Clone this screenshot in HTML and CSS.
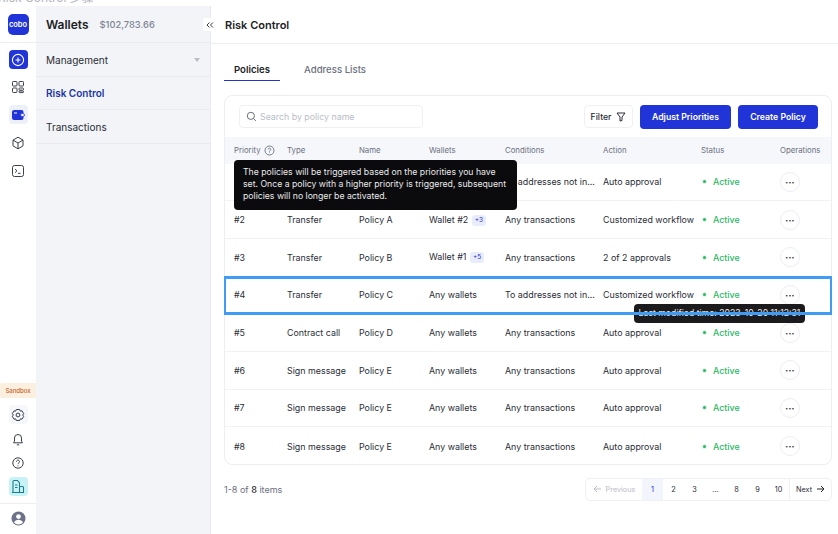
FILE: index.html
```html
<!DOCTYPE html>
<html lang="en">
<head>
<meta charset="utf-8">
<title>Risk Control</title>
<link rel="stylesheet" href="styles.css">
</head>
<body>
<div class="strip"><span>Risk Control 步骤</span></div>
<div class="app">
  <aside class="rail">
    <div class="rail-top">
      <div class="logo">cobo</div>
    </div>
    <div class="rail-main">
      <div class="rail-btn add"><svg width="14" height="14" viewBox="0 0 14 14" fill="none" stroke="#fff" stroke-width="1.1"><circle cx="7" cy="7" r="5.6"/><path d="M7 4.5v5M4.5 7h5"/></svg></div>
      <div class="rail-btn"><svg width="14" height="14" viewBox="0 0 14 14" fill="none" stroke="#3a3f4b" stroke-width="1"><rect x="1.5" y="1.5" width="4.5" height="4.5" rx=".8"/><rect x="8" y="1.5" width="4.5" height="4.5" rx=".8"/><rect x="1.5" y="8" width="4.5" height="4.5" rx=".8"/><rect x="8" y="8" width="4.5" height="2.2" rx=".8"/><rect x="8" y="11" width="4.5" height="1.6" rx=".6"/></svg></div>
      <div class="rail-btn soft"><svg width="14" height="12" viewBox="0 0 14 12"><rect x="1" y="1" width="11.5" height="10" rx="2" fill="#2134d8"/><path d="M3 4h3" stroke="#fff" stroke-width="1"/><rect x="9.5" y="4.6" width="4" height="2.8" rx="1.4" fill="#fff" stroke="#2134d8" stroke-width=".8"/></svg></div>
      <div class="rail-btn"><svg width="14" height="14" viewBox="0 0 14 14" fill="none" stroke="#3a3f4b" stroke-width="1"><path d="M7 1.2l5 2.9v5.8l-5 2.9-5-2.9V4.100zM2 4.100l5 2.900 5-2.900M7 7v5.800"/></svg></div>
      <div class="rail-btn"><svg width="14" height="14" viewBox="0 0 14 14" fill="none" stroke="#3a3f4b" stroke-width="1"><rect x="1.5" y="1.500" width="11" height="11" rx="2"/><path d="M4 5l2 1.800L4 8.600M7 9.300h2.500"/></svg></div>
    </div>
    <div class="rail-bottom">
      <div class="sandbox">Sandbox</div>
      <div class="rail-btn pale"><svg width="14" height="14" viewBox="0 0 14 14" fill="none" stroke="#3a3f4b" stroke-width="1"><path d="M5.300 1.500h3.400l.6 1.600 1.700-.3 1.700 2.900-1.100 1.300 1.100 1.300-1.700 2.900-1.700-.3-.6 1.600H5.300l-.6-1.600-1.700.3-1.700-2.900L2.400 7 1.300 5.700 3 2.800l1.700.3z"/><circle cx="7" cy="7" r="1.900"/></svg></div>
      <div class="rail-btn"><svg width="14" height="14" viewBox="0 0 14 14" fill="none" stroke="#3a3f4b" stroke-width="1"><path d="M2.500 10.800h9l-1-1.500V6a3.500 3.500 0 0 0-7 0v3.300zM5.800 12.800h2.400"/></svg></div>
      <div class="rail-btn"><svg width="14" height="14" viewBox="0 0 14 14" fill="none" stroke="#3a3f4b" stroke-width="1"><circle cx="7" cy="7" r="5.200"/><path d="M5.500 5.600a1.500 1.500 0 1 1 2.300 1.300c-.6.400-.8.700-.8 1.300M7 9.500v.8"/></svg></div>
      <div class="rail-btn cyan"><svg width="14" height="15" viewBox="0 0 14 15" fill="none" stroke="#1f7c8c" stroke-width="1.100"><path d="M2 13.500V2.500a1 1 0 0 1 1-1h3.500l2 2.500v9.500zM8.500 7.500h3a1 1 0 0 1 1 1v5h-4M4 6h2.500M4 8.500h2.500M1 13.500h12"/></svg></div>
      <div class="rail-user"><svg width="15" height="15" viewBox="0 0 15 15"><circle cx="7.500" cy="7.500" r="7" fill="#6b7189"/><circle cx="7.500" cy="5.600" r="2.400" fill="#fff"/><path d="M3 11.500c.8-2 2.500-2.800 4.500-2.800s3.700.8 4.500 2.800a6 6 0 0 1-9 0z" fill="#fff"/></svg></div>
    </div>
  </aside>

  <nav class="panel">
    <div class="panel-head">
      <span class="panel-title">Wallets</span>
      <span class="panel-amount">$102,783.66</span>
    </div>
    <div class="nav-row"><span>Management</span><i class="caret"></i></div>
    <div class="nav-row current"><span>Risk Control</span></div>
    <div class="nav-row"><span>Transactions</span></div>
    <button class="collapse" type="button"><svg width="8" height="8" viewBox="0 0 8 8" fill="none" stroke="#3a3f4b" stroke-width="1"><path d="M3.500 1.500L1 4l2.500 2.500M7 1.500L4.500 4 7 6.500"/></svg></button>
  </nav>

  <main class="main">
    <header class="main-head">Risk Control</header>
    <div class="content">
      <div class="tabs">
        <span class="tab active">Policies</span>
        <span class="tab">Address Lists</span>
      </div>
      <section class="card">
        <div class="toolbar">
          <div class="search"><svg width="11" height="11" viewBox="0 0 12 12" fill="none" stroke="#5b6070" stroke-width="1"><circle cx="5.300" cy="5.300" r="3.900"/><path d="M8.200 8.200l2.600 2.600"/></svg><span>Search by policy name</span></div>
          <div class="tools">
            <div class="filter">Filter <svg width="10" height="10" viewBox="0 0 10 10" fill="none" stroke="#2b2f3a" stroke-width="1"><path d="M1 1h8L6 5v3.500L4 9V5z"/></svg></div>
            <div class="btn wide">Adjust Priorities</div>
            <div class="btn">Create Policy</div>
          </div>
        </div>
        <div class="row head">
          <span class="pri">Priority <svg width="11" height="11" viewBox="0 0 11 11" fill="none" stroke="#5b6070" stroke-width=".8"><circle cx="5.500" cy="5.500" r="4.500"/><path d="M4.200 4.400a1.300 1.300 0 1 1 2 1.100c-.5.300-.7.500-.7 1M5.500 7.500v.6"/></svg></span>
          <span>Type</span><span>Name</span><span>Wallets</span><span>Conditions</span><span>Action</span><span>Status</span><span>Operations</span>
        </div>
        <div class="row"><span>#1</span><span>Transfer</span><span>Policy A</span><span>Any wallets</span><span>To addresses not in...</span><span>Auto approval</span><span class="status">Active</span><span class="more">•••</span></div>
        <div class="row"><span>#2</span><span>Transfer</span><span>Policy A</span><span>Wallet #2 <em>+3</em></span><span>Any transactions</span><span>Customized workflow</span><span class="status">Active</span><span class="more">•••</span></div>
        <div class="row"><span>#3</span><span>Transfer</span><span>Policy B</span><span>Wallet #1 <em>+5</em></span><span>Any transactions</span><span>2 of 2 approvals</span><span class="status">Active</span><span class="more">•••</span></div>
        <div class="row"><span>#4</span><span>Transfer</span><span>Policy C</span><span>Any wallets</span><span>To addresses not in...</span><span>Customized workflow</span><span class="status">Active</span><span class="more">•••</span></div>
        <div class="row"><span>#5</span><span>Contract call</span><span>Policy D</span><span>Any wallets</span><span>Any transactions</span><span>Auto approval</span><span class="status">Active</span><span class="more">•••</span></div>
        <div class="row"><span>#6</span><span>Sign message</span><span>Policy E</span><span>Any wallets</span><span>Any transactions</span><span>Auto approval</span><span class="status">Active</span><span class="more">•••</span></div>
        <div class="row"><span>#7</span><span>Sign message</span><span>Policy E</span><span>Any wallets</span><span>Any transactions</span><span>Auto approval</span><span class="status">Active</span><span class="more">•••</span></div>
        <div class="row last"><span>#8</span><span>Sign message</span><span>Policy E</span><span>Any wallets</span><span>Any transactions</span><span>Auto approval</span><span class="status">Active</span><span class="more">•••</span></div>
        <div class="tip tip-a">The policies will be triggered based on the priorities you have set. Once a policy with a higher priority is triggered, subsequent policies will no longer be activated.</div>
        <div class="tip tip-b">Last modified time: 2023-10-20 11:12:31</div>
        <div class="highlight"></div>
      </section>
      <footer class="foot">
        <span class="count">1-8 of <b>8</b> items</span>
        <div class="pager">
          <span class="prev"><svg width="9" height="8" viewBox="0 0 9 8" fill="none" stroke="#b9bdc7" stroke-width="1"><path d="M8 4H1M4 1L1 4l3 3"/></svg>Previous</span>
          <span class="page on">1</span><span class="page">2</span><span class="page">3</span><span class="page">...</span><span class="page">8</span><span class="page">9</span><span class="page">10</span>
          <span class="next">Next<svg width="9" height="8" viewBox="0 0 9 8" fill="none" stroke="#23262f" stroke-width="1"><path d="M1 4h7M5 1l3 3-3 3"/></svg></span>
        </div>
      </footer>
    </div>
  </main>
</div>
</body>
</html>
```
FILE: styles.css
```css
* { box-sizing: border-box; }
html, body { margin: 0; height: 100%; }
body {
  width: 838px; height: 534px; overflow: hidden; background: #fff;
  font-family: Inter, "Noto Sans CJK SC", sans-serif; font-size: 9px; color: #2a2d36;
}
.strip { height: 6px; overflow: hidden; color: #b4b6bb; font-size: 12px; line-height: 1; }
.strip span { display: block; margin-top: -8px; margin-left: -2px; }
.app { display: flex; height: 528px; }

.rail { width: 36px; flex: none; display: flex; flex-direction: column; background: #fff; }
.rail-top { height: 37px; display: flex; align-items: center; justify-content: center; border-bottom: 1px solid #eceef1; padding-top: 1px; }
.logo { width: 21px; height: 21px; border-radius: 5px; background: #2134d8; color: #fff; font-size: 7.500px; font-weight: 600; display: flex; align-items: center; justify-content: center; }
.rail-main { padding-top: 7px; display: flex; flex-direction: column; align-items: center; gap: 9px; flex: 1; }
.rail-btn { width: 19px; height: 19px; border-radius: 4px; display: flex; align-items: center; justify-content: center; flex: none; }
.rail-btn.add { background: #2134d8; margin-bottom: -1px; }
.rail-btn.soft { background: #eef0f8; }
.rail-btn.pale { background: #f6f7fb; }
.rail-btn.cyan { background: #c8f3f6; }
.rail-bottom { display: flex; flex-direction: column; align-items: center; gap: 5px; }
.sandbox { width: 36px; height: 15px; margin-bottom: 2px; background: #fbefdf; color: #c8652a; font-size: 6px; font-weight: 500; text-align: center; line-height: 15px; border-radius: 2px 0 0 2px; }
.rail-user { width: 36px; height: 31px; padding-bottom: 2px; margin-top: 2px; border-top: 1px solid #eceef1; display: flex; align-items: center; justify-content: center; }

.panel { position: relative; width: 175px; flex: none; background: #f2f4f7; border-right: 1px solid #e9ebef; }
.panel-head { height: 37px; padding: 0 10px; display: flex; align-items: center; gap: 11px; border-bottom: 1px solid #e9ebef; }
.panel-title { font-size: 12px; font-weight: 600; color: #1c1e25; }
.panel-amount { font-size: 9.300px; font-weight: 500; color: #7f8493; }
.nav-row { height: 33.500px; padding: 1px 10px 0; display: flex; align-items: center; justify-content: space-between; border-bottom: 1px solid #e9ebef; font-size: 10px; color: #2a2d36; }
.nav-row.current { color: #2134a8; font-weight: 600; }
.caret { width: 0; height: 0; border-left: 3px solid transparent; border-right: 3px solid transparent; border-top: 4px solid #b9bdc7; }
.collapse { position: absolute; top: 12px; right: -7px; width: 14px; height: 13px; padding: 0; border: 0; border-radius: 3px; background: #fff; display: flex; align-items: center; justify-content: center; }

.main { flex: 1; min-width: 0; display: flex; flex-direction: column; }
.main-head { height: 38px; padding: 0 14px; display: flex; align-items: center; border-bottom: 1px solid #eceef1; font-size: 11px; font-weight: 600; color: #1c1e25; }
.content { padding: 0 6px 0 13px; display: flex; flex-direction: column; }
.tabs { height: 37px; display: flex; align-items: flex-end; }
.tab { width: 56px; height: 26px; padding-top: 5px; text-align: center; line-height: 20px; font-size: 9.600px; color: #6b7080; font-weight: 500; }
.tab.active { color: #1c1e25; font-weight: 600; border-bottom: 1px solid #2134d8; }
.tab + .tab { margin-left: 24px; width: auto; }

.card { position: relative; margin-top: 14px; height: 370px; border: 1px solid #eceef1; border-radius: 8px; }
.toolbar { height: 41px; padding: 0 13px 0 14px; display: flex; align-items: center; justify-content: space-between; }
.search { width: 184px; height: 23px; padding: 0 6px; border: 1px solid #eef0f3; border-radius: 4px; display: flex; align-items: center; gap: 3px; color: #b9bdc7; font-size: 8.800px; }
.tools { display: flex; gap: 7px; align-items: center; }
.filter { width: 49px; height: 23px; border: 1px solid #eef0f3; border-radius: 4px; display: flex; align-items: center; justify-content: center; gap: 5px; font-size: 8.700px; font-weight: 500; }
.btn { width: 80px; height: 24px; border-radius: 4px; background: #2134d8; color: #fff; font-size: 8.700px; font-weight: 600; display: flex; align-items: center; justify-content: center; }
.btn.wide { width: 91px; }

.row { display: grid; grid-template-columns: 53px 72px 70px 76px 98px 98px 79px 1fr; height: 37.700px; padding-left: 9px; align-items: center; border-bottom: 1px solid #f1f2f5; font-size: 8.900px; }
.row.head { height: 26.500px; background: #f6f7fb; border-bottom: 0; color: #6b7080; font-size: 7.800px; }
.row.last { border-bottom: 0; }
.pri { display: flex; align-items: center; gap: 3px; }
.row em { display: inline-block; font-style: normal; font-size: 6.500px; line-height: 11px; padding: 0 3px; margin-left: 1px; border-radius: 3px; background: #e9ecfb; color: #2134d8; vertical-align: 1px; }
.status { color: #2cb765; font-weight: 500; display: flex; align-items: center; gap: 7px; padding-left: 2px; }
.status::before { content: ""; width: 3px; height: 3px; border-radius: 50%; background: #2cb765; box-shadow: 0 0 0 1px #dff5e7; }
.more { width: 20px; height: 20px; border: 1px solid #eceef1; border-radius: 50%; font-size: 5px; line-height: 18px; text-align: center; letter-spacing: .3px; background: #fff; }

.highlight { position: absolute; left: -1px; right: -1px; top: 180px; height: 39px; border-style: solid; border-color: #3f9cf5; border-width: 3px 2px; pointer-events: none; }
.tip { position: absolute; background: #0b0b0d; color: #e9eaec; border-radius: 4px; }
.tip-a { left: 9px; top: 64px; width: 283px; height: 50px; padding: 6px 9px; line-height: 12px; font-size: 8.700px; }
.tip-b { left: 409px; top: 208px; width: 171px; height: 19px; line-height: 18px; text-align: center; font-size: 8.700px; background: #1b1b1d; }

.foot { height: 48px; display: flex; align-items: center; justify-content: space-between; }
.count { color: #6b7080; font-size: 9px; }
.count b { color: #2a2d36; font-weight: 500; }
.pager { height: 23px; display: flex; align-items: center; border: 1px solid #eef0f3; border-radius: 5px; font-size: 7.300px; }
.prev { width: 56px; display: flex; align-items: center; justify-content: center; gap: 4px; color: #b9bdc7; }
.page { width: 21px; height: 100%; display: flex; align-items: center; justify-content: center; }
.page.on { background: #f3f5fc; color: #2134d8; }
.next { width: 42px; height: 100%; border-left: 1px solid #eef0f3; display: flex; align-items: center; justify-content: center; gap: 4px; }
```
